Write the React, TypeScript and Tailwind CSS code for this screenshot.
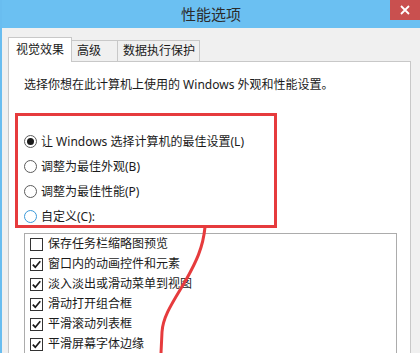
import React from "react";

const font = { fontFamily: '"Noto Sans", "Noto Sans CJK SC", sans-serif' };

const radios = [
  { label: "让 Windows 选择计算机的最佳设置(L)", checked: true },
  { label: "调整为最佳外观(B)", checked: false },
  { label: "调整为最佳性能(P)", checked: false },
  { label: "自定义(C):", checked: false, hover: true },
];

const effects = [
  { label: "保存任务栏缩略图预览", checked: false },
  { label: "窗口内的动画控件和元素", checked: true },
  { label: "淡入淡出或滑动菜单到视图", checked: true },
  { label: "滑动打开组合框", checked: true },
  { label: "平滑滚动列表框", checked: true },
  { label: "平滑屏幕字体边缘", checked: true },
];

function Radio({ checked, hover }: { checked: boolean; hover?: boolean }) {
  return (
    <span
      className={`flex h-[13px] w-[13px] items-center justify-center rounded-full border bg-white ${
        hover ? "border-[#3c9ad9] bg-[#eaf5fd]" : "border-[#5c5c5c]"
      }`}
    >
      {checked && <span className="h-[7px] w-[7px] rounded-full bg-[#1a1a1a]" />}
    </span>
  );
}

function Check({ checked }: { checked: boolean }) {
  return (
    <span className="flex h-[13px] w-[13px] items-center justify-center border border-[#333] bg-white">
      {checked && (
        <svg width="11" height="11" viewBox="0 0 11 11">
          <path d="M1.8 5.6 L4.3 8.2 L9.3 2.3" fill="none" stroke="#1a1a1a" strokeWidth="1.7" />
        </svg>
      )}
    </span>
  );
}

export default function App() {
  return (
    <div
      className="relative h-[353px] w-[420px] overflow-hidden border-l-2 border-[#69bdf0] bg-[#f0f0f0] text-[12px] text-[#1a1a1a]"
      style={font}
    >
      {/* title bar */}
      <div className="relative flex h-[28px] items-center justify-center bg-[#6bc0f2]">
        <span className="text-[15px] text-[#2b2b2b]">性能选项</span>
        <div className="absolute right-0 top-0 flex h-[20px] w-[30px] items-center justify-center bg-[#c9504f]">
          <svg width="10" height="10" viewBox="0 0 10 10">
            <path d="M1 1 L9 9 M9 1 L1 9" stroke="#fff" strokeWidth="1.8" />
          </svg>
        </div>
      </div>

      {/* tabs */}
      <div className="mt-[9px] flex items-end pl-[6px]">
        <div className="relative z-10 -mb-px flex h-[25px] w-[64px] items-center border border-b-0 border-[#c8c8c8] bg-white pl-[7px]">
          视觉效果
        </div>
        <div className="flex h-[21px] w-[46px] items-center border border-l-0 border-b-0 border-[#c8c8c8] bg-[#f0f0f0] pl-[5px]">
          高级
        </div>
        <div className="flex h-[21px] w-[82px] items-center border border-l-0 border-b-0 border-[#c8c8c8] bg-[#f0f0f0] pl-[5px]">
          数据执行保护
        </div>
      </div>

      {/* panel */}
      <div className="ml-[6px] h-[300px] w-[403px] border border-b-0 border-[#c8c8c8] bg-white pl-[15px] pt-[15px]">
        <p className="leading-[16px]">选择你想在此计算机上使用的 Windows 外观和性能设置。</p>

        <div className="mt-[36px] flex flex-col">
          {radios.map((r) => (
            <div key={r.label} className="flex h-[25px] items-center gap-[4px]">
              <Radio checked={r.checked} hover={r.hover} />
              <span className="leading-[16px]">{r.label}</span>
            </div>
          ))}
        </div>

        <div className="mt-[4px] h-[130px] w-[373px] border border-b-0 border-[#acacac] bg-white pl-[5px]">
          {effects.map((e) => (
            <div key={e.label} className="flex h-[20px] items-center gap-[5px]">
              <Check checked={e.checked} />
              <span className="leading-[16px]">{e.label}</span>
            </div>
          ))}
        </div>
      </div>

      {/* red annotation */}
      <svg
        className="pointer-events-none absolute left-[-2px] top-0"
        width="420"
        height="353"
        viewBox="0 0 420 353"
      >
        <rect x="16.5" y="114.5" width="259" height="112" fill="none" stroke="#e63b3d" strokeWidth="3" />
        <path
          d="M205 227 C203 248 196 262 186 280 C173 302 163 316 162 332 L161 353"
          fill="none"
          stroke="#e63b3d"
          strokeWidth="3"
          strokeLinecap="round"
        />
      </svg>
    </div>
  );
}
